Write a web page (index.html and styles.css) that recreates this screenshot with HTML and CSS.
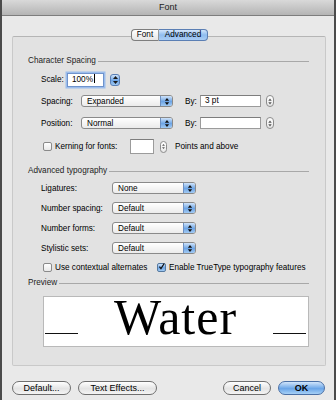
FILE: index.html
```html
<!DOCTYPE html>
<html>
<head>
  <meta charset="UTF-8">
  <title>Font</title>
  <link rel="stylesheet" href="styles.css">
</head>
<body>
  <div class="window">
    <div class="titlebar">Font</div>

    <div class="content">
      <div class="tabs">
        <span class="tab tab-font">Font</span>
        <span class="tab tab-adv active">Advanced</span>
      </div>

      <div class="group">
        <!-- Character spacing -->
        <div class="heading"><span>Character Spacing</span><i></i></div>

        <div class="row row-scale">
          <label class="lbl-scale">Scale:</label>
          <div class="field field-scale">100%<b class="caret"></b></div>
          <div class="stepper blue">
            <svg viewBox="0 0 7 10"><polygon points="1,4 3.5,1 6,4"/><polygon points="1,6 3.5,9 6,6"/></svg>
          </div>
        </div>

        <div class="row row-spacing">
          <label class="lbl-spacing">Spacing:</label>
          <div class="popup popup-wide"><span>Expanded</span><em><svg viewBox="0 0 7 10"><polygon points="1,4 3.5,1 6,4"/><polygon points="1,6 3.5,9 6,6"/></svg></em></div>
          <label class="lbl-by">By:</label>
          <div class="field field-by">3 pt</div>
          <div class="stepper small">
            <svg viewBox="0 0 7 10"><polygon points="1.5,4 3.5,1.5 5.5,4"/><polygon points="1.5,6 3.5,8.5 5.5,6"/></svg>
          </div>
        </div>

        <div class="row row-position">
          <label class="lbl-spacing">Position:</label>
          <div class="popup popup-wide"><span>Normal</span><em><svg viewBox="0 0 7 10"><polygon points="1,4 3.5,1 6,4"/><polygon points="1,6 3.5,9 6,6"/></svg></em></div>
          <label class="lbl-by">By:</label>
          <div class="field field-by"></div>
          <div class="stepper small">
            <svg viewBox="0 0 7 10"><polygon points="1.5,4 3.5,1.5 5.5,4"/><polygon points="1.5,6 3.5,8.5 5.5,6"/></svg>
          </div>
        </div>

        <div class="row row-kerning">
          <span class="check"></span>
          <label class="lbl-kerning">Kerning for fonts:</label>
          <div class="field field-kern"></div>
          <div class="stepper small">
            <svg viewBox="0 0 7 10"><polygon points="1.5,4 3.5,1.5 5.5,4"/><polygon points="1.5,6 3.5,8.5 5.5,6"/></svg>
          </div>
          <label class="lbl-points">Points and above</label>
        </div>

        <!-- Advanced typography -->
        <div class="heading heading-adv"><span>Advanced typography</span><i></i></div>

        <div class="row row-typo first">
          <label class="lbl-typo">Ligatures:</label>
          <div class="popup popup-typo"><span>None</span><em><svg viewBox="0 0 7 10"><polygon points="1,4 3.5,1 6,4"/><polygon points="1,6 3.5,9 6,6"/></svg></em></div>
        </div>
        <div class="row row-typo">
          <label class="lbl-typo">Number spacing:</label>
          <div class="popup popup-typo"><span>Default</span><em><svg viewBox="0 0 7 10"><polygon points="1,4 3.5,1 6,4"/><polygon points="1,6 3.5,9 6,6"/></svg></em></div>
        </div>
        <div class="row row-typo">
          <label class="lbl-typo">Number forms:</label>
          <div class="popup popup-typo"><span>Default</span><em><svg viewBox="0 0 7 10"><polygon points="1,4 3.5,1 6,4"/><polygon points="1,6 3.5,9 6,6"/></svg></em></div>
        </div>
        <div class="row row-typo">
          <label class="lbl-typo">Stylistic sets:</label>
          <div class="popup popup-typo"><span>Default</span><em><svg viewBox="0 0 7 10"><polygon points="1,4 3.5,1 6,4"/><polygon points="1,6 3.5,9 6,6"/></svg></em></div>
        </div>

        <div class="row row-checks">
          <div class="opt opt-ctx">
            <span class="check"></span>
            <label>Use contextual alternates</label>
          </div>
          <div class="opt">
            <span class="check checked">
              <svg viewBox="0 0 9 9"><path d="M1.8 4.6 L3.8 7.2 L8 0.6"/></svg>
            </span>
            <label>Enable TrueType typography features</label>
          </div>
        </div>

        <!-- Preview -->
        <div class="heading heading-preview"><span>Preview</span><i></i></div>
        <div class="preview">
          <span class="rule"></span>
          <span class="sample">Water</span>
          <span class="rule"></span>
        </div>
      </div>

      <div class="buttons">
        <div class="btn-group">
          <button class="btn btn-default">Default...</button>
          <button class="btn btn-effects">Text Effects...</button>
        </div>
        <div class="btn-group">
          <button class="btn btn-cancel">Cancel</button>
          <button class="btn btn-ok">OK</button>
        </div>
      </div>
    </div>
  </div>
</body>
</html>
```

FILE: styles.css
```css
body {
  margin: 0;
  background: #fff;
  font-family: "Liberation Sans", Arial, sans-serif;
  font-size: 8.2px;
  color: #000;
}
.window {
  width: 332px;
  height: 400px;
  border-left: 2px solid #4b4b4b;
  border-right: 2px solid #4b4b4b;
  background: #e9e9e9;
  overflow: hidden;
}
.titlebar {
  height: 15px;
  line-height: 15px;
  text-align: center;
  font-size: 9px;
  color: #222;
  background: linear-gradient(#d9d9d9, #b4b4b4);
  border-bottom: 1px solid #7d7d7d;
}
.content {
  padding: 13px 7px 0 10px;
}

/* segmented tabs */
.tabs {
  display: flex;
  justify-content: center;
  position: relative;
  z-index: 1;
  height: 12px;
  margin-bottom: -5px;
}
.tab {
  height: 10px;
  line-height: 10px;
  text-align: center;
  border: 1px solid #7e7e7e;
  background: linear-gradient(#ffffff, #e6e6e6);
}
.tab-font {
  width: 26px;
  border-radius: 4px 0 0 4px;
  border-right: 1px solid #9a9a9a;
}
.tab-adv {
  width: 48px;
  border-left: none;
  border-radius: 0 4px 4px 0;
}
.tab.active {
  border-color: #5b7fb4;
  background: linear-gradient(#d3e6fb, #8fbcef 50%, #a9cdf4);
}

/* group box */
.group {
  width: 281px;
  height: 310px;
  padding: 18px 16px 0 15px;
  border: 1px solid #c9c9c9;
  border-top-color: #b5b5b5;
  border-radius: 2px;
  background: #e2e2e2;
}
.heading {
  display: flex;
  align-items: center;
  height: 10px;
  color: #222;
}
.heading i {
  flex: 1;
  height: 0;
  margin: 3px 0 0 2px;
  border-top: 1px solid #a8a8a8;
}
.heading-adv { margin-top: 11px; }
.heading-preview { margin-top: 4px; }

.row {
  display: flex;
  align-items: center;
  height: 12px;
  padding-left: 13px;
  margin-top: 8px;
}
.row-scale { height: 15px; margin-top: 7px; }
.row-spacing { margin-top: 8px; }
.row-position { margin-top: 10px; }
.row-kerning { height: 15px; margin-top: 10px; }
.row-typo { margin-top: 8px; }
.row-typo.first { margin-top: 7px; }
.row-checks { margin-top: 7px; }

.lbl-scale { width: 26px; }
.lbl-spacing { width: 40px; }
.lbl-by { width: 15px; margin-left: 12px; }
.lbl-kerning { width: 75px; margin-left: 3px; }
.lbl-points { margin-left: 8px; }
.lbl-typo { width: 71px; }

/* text fields */
.field {
  box-sizing: border-box;
  height: 12px;
  line-height: 10px;
  padding-left: 4px;
  background: #fff;
  border: 1px solid #9b9b9b;
  border-top-color: #7d7d7d;
}
.field-scale {
  width: 37px;
  height: 14px;
  line-height: 12px;
  border: 1px solid #6f93cc;
  box-shadow: 0 0 0 1.5px #9cbdec;
}
.caret {
  display: inline-block;
  width: 1px;
  height: 9px;
  margin-left: 1px;
  vertical-align: -1px;
  background: #000;
}
.field-by { width: 61px; }
.field-kern { width: 24px; height: 15px; }

/* steppers */
.stepper {
  box-sizing: border-box;
  display: flex;
  align-items: center;
  justify-content: center;
  height: 12px;
  border-radius: 3px;
}
.stepper svg { width: 7px; height: 10px; fill: #1a1a1a; }
.stepper.blue {
  width: 10px;
  margin-left: 6px;
  border: 1px solid #5a7fb5;
  background: linear-gradient(#cfe3fa, #6fa6e6 55%, #9ec9f3);
}
.stepper.small {
  width: 8px;
  margin-left: 5px;
  border: 1px solid #8c8c8c;
  border-radius: 4px;
  background: linear-gradient(#ffffff, #e8e8e8);
}
.stepper.small svg { width: 6px; height: 9px; fill: #555; }
.row-kerning .stepper.small { margin-left: 6px; width: 7px; }

/* popup menus */
.popup {
  box-sizing: border-box;
  display: flex;
  align-items: center;
  height: 12px;
  border: 1px solid #8a8a8a;
  border-radius: 3px;
  background: linear-gradient(#ffffff, #ebebeb);
  overflow: hidden;
}
.popup span {
  flex: 1;
  padding-left: 5px;
  color: #000;
}
.popup em {
  display: flex;
  align-items: center;
  justify-content: center;
  width: 11px;
  height: 100%;
  border-left: 1px solid #6d8fc0;
  background: linear-gradient(#cfe3fa, #6ea5e5 55%, #a2cbf4);
}
.popup em svg { width: 6px; height: 9px; fill: #111; }
.popup-wide { width: 92px; }
.popup-typo { width: 84px; }

/* checkboxes */
.check {
  box-sizing: border-box;
  display: flex;
  align-items: center;
  justify-content: center;
  width: 9px;
  height: 9px;
  margin-left: 2px;
  border: 1px solid #8a8a8a;
  border-radius: 2px;
  background: linear-gradient(#ffffff, #e9e9e9);
}
.check.checked {
  border-color: #55799f;
  background: linear-gradient(#cfe3fa, #6ea5e5 55%, #a2cbf4);
  overflow: visible;
}
.check svg {
  width: 9px;
  height: 9px;
  margin-top: -2px;
  fill: none;
  stroke: #111;
  stroke-width: 1.6;
}
.opt {
  display: flex;
  align-items: center;
}
.opt label { margin-left: 3px; }
.opt-ctx { width: 114px; }

/* preview */
.preview {
  box-sizing: border-box;
  display: flex;
  align-items: flex-start;
  justify-content: space-between;
  height: 51px;
  margin: 9px 0 0 15px;
  padding: 0 2px 0 1px;
  background: #fff;
  border: 1px solid #b9b9b9;
}
.rule {
  width: 33px;
  margin-top: 36px;
  border-top: 1.5px solid #111;
}
.sample {
  font-family: "Liberation Serif", "Times New Roman", serif;
  font-size: 50px;
  line-height: 40px;
  letter-spacing: 1px;
  color: #000;
}

/* bottom buttons */
.buttons {
  display: flex;
  justify-content: space-between;
  width: 313px;
  margin-top: 15px;
}
.btn-group {
  display: flex;
  gap: 7px;
}
.btn {
  height: 14px;
  padding: 0;
  font-family: "Liberation Sans", Arial, sans-serif;
  font-size: 9px;
  color: #000;
  border: 1px solid #6f6f6f;
  border-radius: 8px;
  background: linear-gradient(#ffffff, #e4e4e4 55%, #f4f4f4);
}
.btn-default { width: 59px; }
.btn-effects { width: 79px; }
.btn-cancel { width: 48px; }
.btn-ok {
  width: 47px;
  font-weight: bold;
  border-color: #4a6fa5;
  background: linear-gradient(#d1e5fb, #6aa5e8 55%, #a6d0f6);
}
```
